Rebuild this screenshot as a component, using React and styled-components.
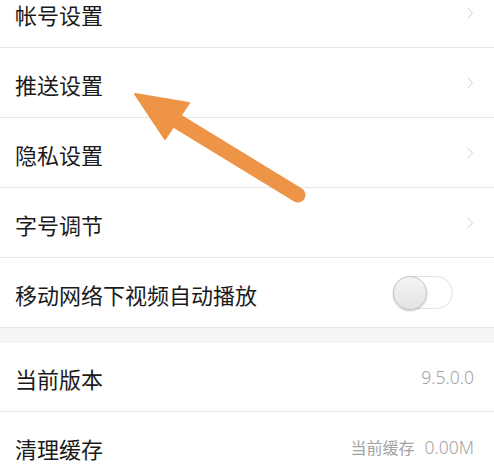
import React from "react";
import styled, { createGlobalStyle } from "styled-components";

const Global = createGlobalStyle`
  html, body { margin: 0; padding: 0; background: #ffffff; }
  body { font-family: "Noto Sans CJK SC", "Noto Sans", sans-serif; overflow: hidden; }
`;

const Page = styled.div`
  position: relative;
  width: 494px;
  height: 469px;
  overflow: hidden;
  background: #ffffff;
`;

const Group = styled.div`
  display: flex;
  flex-direction: column;
  margin-top: ${(p) => p.$offset || 0}px;
`;

const Row = styled.div`
  display: flex;
  align-items: center;
  justify-content: space-between;
  height: ${(p) => p.$h || 69}px;
  padding: 0 20px 0 15px;
  border-bottom: 1px solid #e6e6e6;
  box-sizing: content-box;
`;

const Label = styled.span`
  font-size: 22px;
  color: #1a1a1a;
  line-height: 1;
  padding-top: 2px;
`;

const Value = styled.span`
  display: flex;
  align-items: baseline;
  gap: 10px;
  color: #a3a3a3;
  line-height: 1;
  padding-top: 2px;
`;

const ValueCjk = styled.span`
  font-family: "Noto Sans CJK SC", "Noto Sans", sans-serif;
  font-size: 16px;
`;

const ValueNum = styled.span`
  font-family: "Noto Sans", "Open Sans", sans-serif;
  font-size: 17.5px;
  font-weight: 300;
`;

const Gap = styled.div`
  height: 15px;
  background: #f5f5f5;
`;

const Switch = styled.div`
  position: relative;
  width: 60px;
  height: 33px;
  margin-right: 21px;
  border-radius: 17px;
  border: 1px solid #e2e2e2;
  background: #ffffff;
  box-sizing: border-box;
`;

const Knob = styled.div`
  position: absolute;
  left: -1px;
  top: -1px;
  width: 34px;
  height: 34px;
  border-radius: 50%;
  background: linear-gradient(180deg, #f3f3f3 0%, #e3e3e3 100%);
  border: 1px solid #c4c4c4;
  box-sizing: border-box;
  box-shadow: 0 1px 2px rgba(0, 0, 0, 0.25);
`;

const ArrowLayer = styled.svg`
  position: absolute;
  left: 0;
  top: 0;
  pointer-events: none;
`;

const Chevron = () => (
  <svg width="8" height="14" viewBox="0 0 8 14">
    <path d="M1.5 1.5 L6.5 7 L1.5 12.5" fill="none" stroke="#d2d2d2" strokeWidth="1" />
  </svg>
);

export default function App() {
  return (
    <Page>
      <Global />
      <Group $offset={-22}>
        <Row>
          <Label>帐号设置</Label>
          <Chevron />
        </Row>
        <Row>
          <Label>推送设置</Label>
          <Chevron />
        </Row>
        <Row>
          <Label>隐私设置</Label>
          <Chevron />
        </Row>
        <Row>
          <Label>字号调节</Label>
          <Chevron />
        </Row>
        <Row>
          <Label>移动网络下视频自动播放</Label>
          <Switch>
            <Knob />
          </Switch>
        </Row>
      </Group>
      <Gap />
      <Group>
        <Row $h={68}>
          <Label>当前版本</Label>
          <Value>
            <ValueNum>9.5.0.0</ValueNum>
          </Value>
        </Row>
        <Row>
          <Label>清理缓存</Label>
          <Value>
            <ValueCjk>当前缓存</ValueCjk>
            <ValueNum>0.00M</ValueNum>
          </Value>
        </Row>
      </Group>
      <ArrowLayer width="494" height="469" viewBox="0 0 494 469">
        <line x1="172" y1="118" x2="298" y2="195" stroke="#EE9446" strokeWidth="15" strokeLinecap="round" />
        <polygon points="135,94 189,103 165,139" fill="#EE9446" stroke="#EE9446" strokeWidth="2" strokeLinejoin="round" />
      </ArrowLayer>
    </Page>
  );
}
